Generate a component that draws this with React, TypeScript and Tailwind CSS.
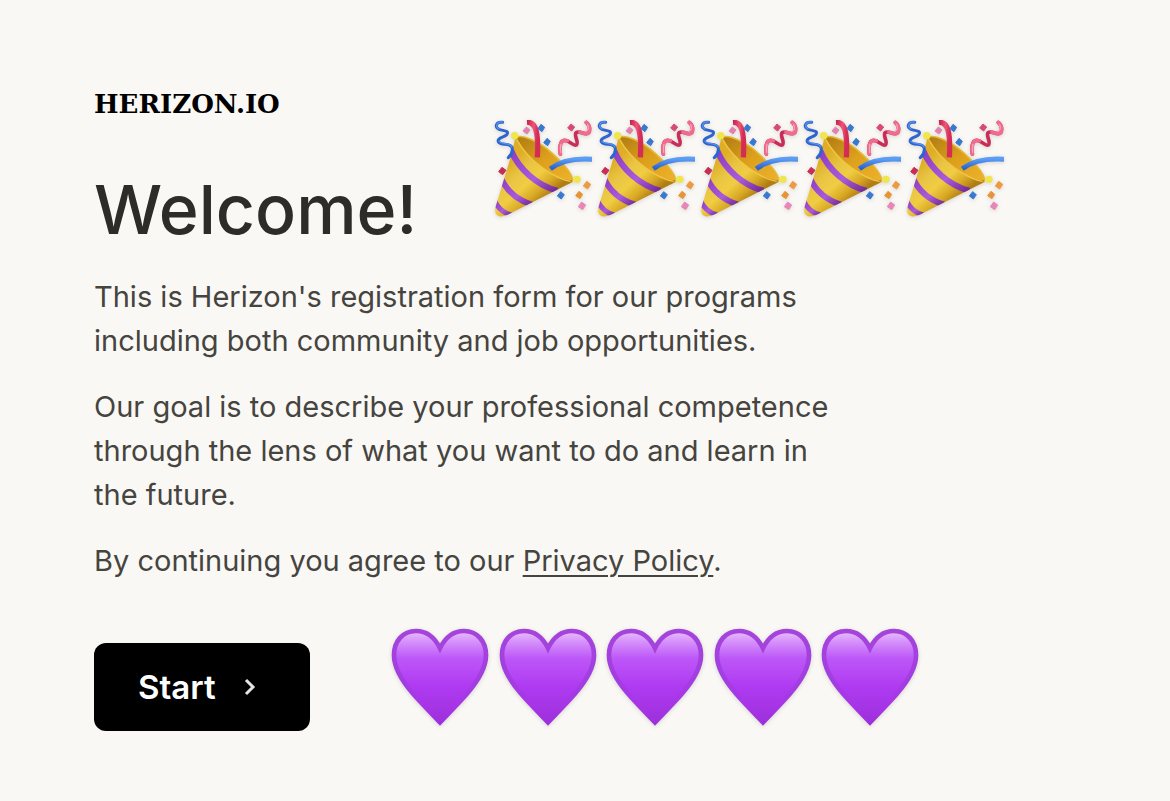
import React from 'react';

const poppers = [0, 1, 2, 3, 4];
const hearts = [0, 1, 2, 3, 4];

function PartyPopper() {
  return (
    <svg viewBox="42 45 294 294" className="size-[98px] shrink-0 drop-shadow-sm" aria-hidden="true">
      <defs>
        <linearGradient id="cone" gradientUnits="userSpaceOnUse" x1="80" y1="180" x2="180" y2="295">
          <stop offset="0" stopColor="#dfae26" />
          <stop offset="0.3" stopColor="#e9c544" />
          <stop offset="0.55" stopColor="#f0cd42" />
          <stop offset="0.8" stopColor="#d8a824" />
          <stop offset="1" stopColor="#b07c14" />
        </linearGradient>
        <linearGradient id="mouth" x1="0" y1="0" x2="1" y2="1">
          <stop offset="0" stopColor="#ae7a12" />
          <stop offset="0.5" stopColor="#dda01c" />
          <stop offset="1" stopColor="#efb22c" />
        </linearGradient>
        <linearGradient id="stripe" x1="0" y1="0" x2="1" y2="1">
          <stop offset="0" stopColor="#8e3cc4" />
          <stop offset="0.6" stopColor="#a95bda" />
          <stop offset="1" stopColor="#6f2896" />
        </linearGradient>
        <linearGradient id="red" x1="0" y1="0" x2="1" y2="0.3">
          <stop offset="0" stopColor="#c91f4b" />
          <stop offset="0.6" stopColor="#ee5576" />
          <stop offset="1" stopColor="#d42c55" />
        </linearGradient>
        <linearGradient id="blue" x1="0" y1="0" x2="0" y2="1">
          <stop offset="0" stopColor="#5c9df5" />
          <stop offset="1" stopColor="#2a62ce" />
        </linearGradient>
        <clipPath id="coneShape">
          <path d="M108 98 C101 112 97 140 91 160 L46 308 Q43 326 54 332 Q62 338 83 329 L258 241 Q277 234 276 226 C230 222 145 172 108 98Z" />
        </clipPath>
      </defs>
      <path d="M108 98 C122 86 178 108 220 148 C254 178 285 218 276 230 C264 240 210 215 165 174 C126 139 98 112 108 98Z" fill="url(#mouth)" stroke="#e5b832" strokeWidth="5" />
      <path d="M108 98 C101 112 97 140 91 160 L46 308 Q43 326 54 332 Q62 338 83 329 L258 241 Q277 234 276 226 C230 222 145 172 108 98Z" fill="url(#cone)" />
      <path d="M110 103 C148 174 230 222 272 229" fill="none" stroke="#f0c647" strokeWidth="4" />
      <g clipPath="url(#coneShape)" fill="none" stroke="url(#stripe)">
        <path d="M94 138 C116 192 172 242 232 257" strokeWidth="18" />
        <path d="M64 222 C80 256 106 283 156 299" strokeWidth="18" />
        <path d="M44 288 C54 310 68 323 94 330" strokeWidth="15" />
      </g>
      <path d="M141 52 C167 50 176 81 172 157" fill="none" stroke="url(#red)" strokeWidth="16" />
      <path d="M211 191 C244 166 287 159 340 163" fill="none" stroke="url(#blue)" strokeWidth="15" />
      {/* curled streamers */}
      <g fill="none" strokeLinecap="round" strokeLinejoin="round">
        <path d="M68 52 C48 49 43 66 57 73 C69 78 88 76 81 88 C74 98 50 96 55 110 C62 123 90 112 96 127 C99 138 94 150 85 158" stroke="#2d64ce" strokeWidth="9" />
        <path d="M67 51 C49 49 45 66 57 72 M57 109 C67 120 90 111 96 126" stroke="#5a91ed" strokeWidth="4" />
        <path d="M319 52 C332 63 332 84 319 86 C302 86 298 76 288 83 C281 91 298 113 289 120 C279 126 265 100 249 107 C238 112 239 132 241 147" stroke="#c92c57" strokeWidth="11" />
        <path d="M319 52 C332 63 332 84 319 86 C310 86 306 83 300 81 M262 107 C242 101 238 122 241 147" stroke="#f06b8d" strokeWidth="11" />
        <path d="M323 59 C328 70 324 77 317 79 M243 118 C240 126 242 136 242 142" stroke="#f9a2b6" strokeWidth="4" />
      </g>
      <circle cx="104" cy="92" r="11" fill="#eee64b" />
      <circle cx="291" cy="223" r="11" fill="#eee64b" />
      {/* confetti */}
      <g strokeWidth="3" strokeLinejoin="round">
        <path d="M139 66l11 9-9 12-12-9Z" fill="#e282ac" stroke="#e282ac" />
        <path d="M183 58l11 9-8 13-12-9Z" fill="#3978cf" stroke="#3978cf" />
        <path d="M201 100l10 9-8 13-12-9Z" fill="#3978cf" stroke="#3978cf" />
        <path d="M273 57l11 9-9 12-12-9Z" fill="#d84a71" stroke="#d84a71" />
        <path d="M66 187l12 9-10 13-12-9Z" fill="#c72e53" stroke="#c72e53" />
        <path d="M242 260l11 9-9 13-12-9Z" fill="#3978cf" stroke="#3978cf" />
        <path d="M320 229l12 9-9 14-13-9Z" fill="#ec9b42" stroke="#ec9b42" />
        <path d="M297 259l11 9-8 13-13-9Z" fill="#e69536" stroke="#e69536" />
        <path d="M305 291l12 9-9 14-13-9Z" fill="#e787b7" stroke="#e787b7" />
      </g>
    </svg>
  );
}

function Heart() {
  return (
    <svg viewBox="33 39 294 294" className="size-[98px] shrink-0 drop-shadow-sm" aria-hidden="true">
      <defs>
        <linearGradient id="heartFill" x1="0" y1="0" x2="0" y2="1">
          <stop offset="0" stopColor="#eac0fc" />
          <stop offset="0.12" stopColor="#d590fb" />
          <stop offset="0.3" stopColor="#bd57f8" />
          <stop offset="0.6" stopColor="#b03bf2" />
          <stop offset="1" stopColor="#9d30dc" />
        </linearGradient>
        <linearGradient id="heartEdge" x1="0" y1="0" x2="0" y2="1">
          <stop offset="0" stopColor="#a444db" />
          <stop offset="0.5" stopColor="#a13fe0" />
          <stop offset="0.8" stopColor="#a835e8" />
          <stop offset="1" stopColor="#9d30dc" />
        </linearGradient>
      </defs>
      <path
        d="M180 100 C166 71 142 48 108 48 C68 48 42 79 42 121 C42 162 67 199 98 235 C121 262 155 296 180 322 C205 296 239 262 262 235 C293 199 318 162 318 121 C318 79 292 48 252 48 C218 48 194 71 180 100Z"
        fill="url(#heartFill)"
        stroke="url(#heartEdge)"
        strokeWidth="14"
      />
    </svg>
  );
}

export default function App() {
  return (
    <main className="min-h-screen bg-[#faf8f4] px-[94px] pt-[86px] pb-[68px] font-['Inter',sans-serif] text-[#2d2c28]">
      <header className="flex items-start">
        <div className="w-[400px] shrink-0">
          <div className="font-['DejaVu_Serif',serif] text-[26px] leading-[36px] font-bold text-black">HERIZON.IO</div>
          <h1 className="mt-[47px] text-[68px] leading-[80px] font-medium">Welcome!</h1>
        </div>
        <div className="mt-[34px] flex gap-[5px]" role="img" aria-label="Party poppers">
          {poppers.map((i) => <PartyPopper key={i} />)}
        </div>
      </header>

      <div className="mt-[26px] flex max-w-[760px] flex-col gap-[22px] text-[29px] leading-[44px] text-[#45443f]">
        <p>This is Herizon's registration form for our programs including both community and job opportunities.</p>
        <p>Our goal is to describe your professional competence through the lens of what you want to do and learn in the future.</p>
        <p>
          By continuing you agree to our{' '}
          <a href="#privacy" className="underline decoration-2 underline-offset-4">Privacy Policy</a>.
        </p>
      </div>

      <div className="mt-[45px] flex items-start gap-[81px]">
        <button type="button" className="mt-[15px] flex h-[88px] w-[216px] items-center gap-[28px] rounded-xl bg-black pl-[44px] text-[33px] leading-[40px] font-semibold text-white">
          Start
          <svg viewBox="0 0 12 20" className="h-5 w-3" fill="none" stroke="#e4e4e4" strokeWidth="3" aria-hidden="true">
            <path d="M2 3l7 7-7 7" />
          </svg>
        </button>
        <div className="flex w-[528px] justify-between" role="img" aria-label="Purple hearts">
          {hearts.map((i) => <Heart key={i} />)}
        </div>
      </div>
    </main>
  );
}
